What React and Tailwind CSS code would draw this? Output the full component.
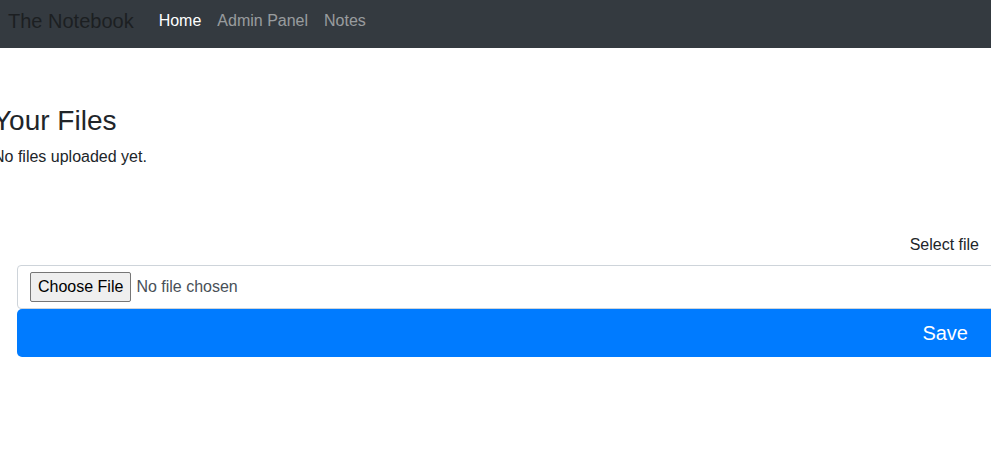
import React from "react";

const NavBar = () => {
  return (
    <nav className="flex h-12 items-center bg-[#343a40] pb-[7px] pl-2">
      <a className="mr-4 text-[20px] leading-[30px] text-[#1c1f22]">The Notebook</a>
      <ul className="flex items-center pl-px">
        <li>
          <a className="block px-2 text-base leading-6 text-white">Home</a>
        </li>
        <li>
          <a className="block px-2 text-base leading-6 text-white/50">Admin Panel</a>
        </li>
        <li>
          <a className="block px-2 text-base leading-6 text-white/50">Notes</a>
        </li>
      </ul>
    </nav>
  );
};

export default function App() {
  return (
    <div
      className="min-h-[457px] w-[991px] overflow-hidden bg-white text-[#212529]"
      style={{ fontFamily: '"Liberation Sans", Arial, sans-serif' }}
    >
      <NavBar />

      {/* Lista de archivos */}
      <div className="-ml-[7px]">
        <h3 className="mt-[56px] text-[28px] leading-[34px]">Your Files</h3>
        <p className="mt-[7px] text-base leading-6">No files uploaded yet.</p>
      </div>

      {/* Formulario de subida */}
      <form className="ml-[17px] mt-[64px] w-[990px]">
        <div className="pr-[28px] text-right text-base leading-6">Select file</div>
        <div className="mt-[8px] flex h-[44px] items-center gap-[5px] rounded-l-[4px] border border-[#ced4da] pl-3">
          <button
            type="button"
            className="h-[30px] rounded-[2px] border border-[#767676] bg-[#efefef] px-[7px] text-base text-black"
          >
            Choose File
          </button>
          <span className="text-base text-[#495057]">No file chosen</span>
        </div>
        <button
          type="button"
          className="block h-[48px] w-full rounded-[5px] bg-[#007bff] pr-[39px] text-right text-[20px] text-white"
        >
          Save
        </button>
      </form>
    </div>
  );
}
